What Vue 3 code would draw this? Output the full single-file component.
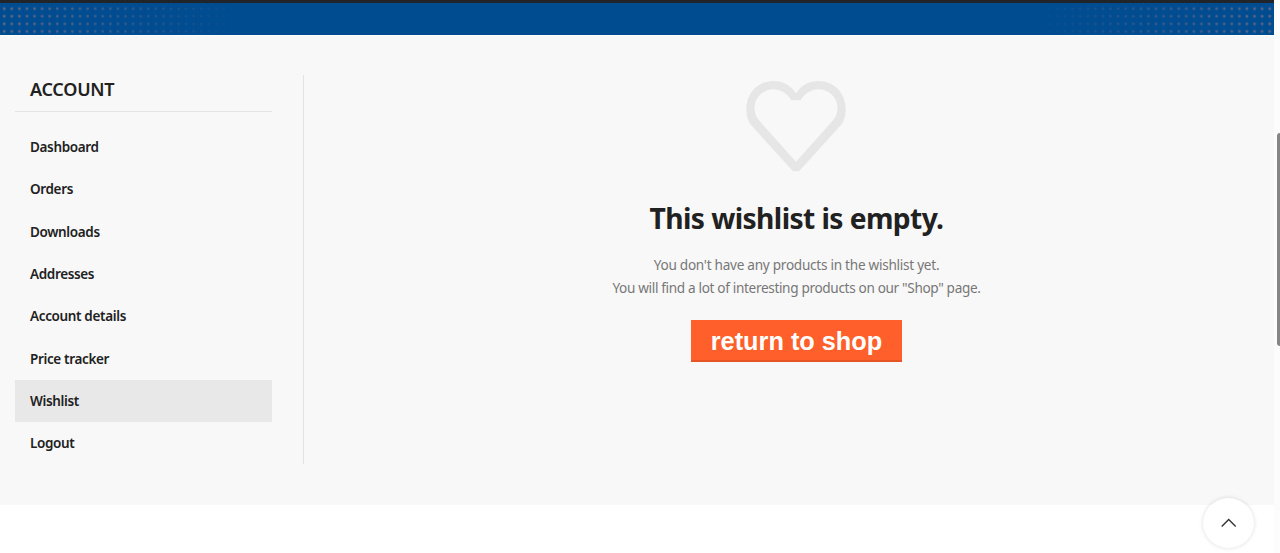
<template>
  <div class="page">
    <div class="page__body">
      <header class="banner">
        <svg class="banner__dots" width="1274" height="32" aria-hidden="true">
          <defs>
            <pattern id="dots" width="7.58" height="7.58" patternUnits="userSpaceOnUse" y="1.8">
              <circle cx="4.2" cy="3.9" r="1.5" fill="#8f7580" />
            </pattern>
            <pattern id="dots-right" x="1266" width="7.58" height="7.58" patternUnits="userSpaceOnUse" y="1.8">
              <circle cx="3.7" cy="3.9" r="1.5" fill="#8f7580" />
            </pattern>
            <linearGradient id="fade">
              <stop offset="0" stop-color="#fff" stop-opacity="0.65" />
              <stop offset="0.19" stop-color="#fff" stop-opacity="0" />
              <stop offset="0.81" stop-color="#fff" stop-opacity="0" />
              <stop offset="1" stop-color="#fff" stop-opacity="0.65" />
            </linearGradient>
            <mask id="edges">
              <rect width="1274" height="32" fill="url(#fade)" />
            </mask>
          </defs>
          <g mask="url(#edges)">
            <rect width="637" height="32" fill="url(#dots)" />
            <rect x="637" width="637" height="32" fill="url(#dots-right)" />
          </g>
        </svg>
      </header>

      <main class="account">
        <aside class="sidebar">
          <h3 class="sidebar__title">Account</h3>
          <ul class="sidebar__list">
            <li v-for="item in menuItems" :key="item">
              <a
                href="#"
                :class="['sidebar__link', { 'sidebar__link--active': item === activeItem }]"
                @click.prevent="activeItem = item"
              >
                {{ item }}
              </a>
            </li>
          </ul>
        </aside>

        <section class="wishlist">
          <svg class="wishlist__heart" width="100" height="91" viewBox="0 0 100 91" aria-hidden="true">
            <path
              fill-rule="evenodd"
              d="M50 12.300C55 4.500 63 0 72.700 0C88 0 99.700 12.300 99.700 28C99.700 34 98.500 39.500 95 44L53 90.300H47L5 44C1.500 39.500 0.300 34 0.300 28C0.300 12.300 12 0 27.300 0C37 0 45 4.500 50 12.300ZM45.400 19.200C41 12.500 35 8.300 27.300 8.300C17 8.300 8.500 16.500 8.500 27C8.500 31.500 10 36 13 39.300L50 80.700L87 39.300C90 36 91.500 31.500 91.500 27C91.500 16.500 83 8.300 72.700 8.300C65 8.300 59 12.500 54.600 19.200Z"
            />
          </svg>
          <h2 class="wishlist__title">This wishlist is empty.</h2>
          <p class="wishlist__text">You don't have any products in the wishlist yet.</p>
          <p class="wishlist__text wishlist__text--hint">
            You will find a lot of interesting products on our "Shop" page.
          </p>
          <a class="wishlist__button" href="#">return to shop</a>
        </section>
      </main>
    </div>

    <div class="scrollbar"><div class="scrollbar__thumb"></div></div>

    <button class="to-top" aria-label="Scroll to top">
      <svg width="16" height="10" viewBox="0 0 16 10">
        <path d="M0.700 8.500L7.700 1.500L14.700 8.500" fill="none" stroke="#333" stroke-width="1.400" />
      </svg>
    </button>
  </div>
</template>

<script setup>
import { ref } from 'vue'

const menuItems = [
  'Dashboard',
  'Orders',
  'Downloads',
  'Addresses',
  'Account details',
  'Price tracker',
  'Wishlist',
  'Logout',
]

const activeItem = ref('Wishlist')
</script>

<style>
body {
  margin: 0;
  overflow: hidden;
}
</style>

<style scoped>
.page {
  display: flex;
  height: 553px;
  background: #fff;
  color: #212121;
  font-family: 'Noto Sans', sans-serif;
}

.page__body {
  width: 1274px;
}

.banner {
  height: 32px;
  border-top: 3px solid #212529;
  background: #004c91;
}

.banner__dots {
  display: block;
}

/* ---------- Account area ---------- */
.account {
  display: flex;
  box-sizing: border-box;
  height: 469px;
  margin-top: 1px;
  padding: 39px 15px 0;
  background: #f8f8f8;
}

.sidebar {
  box-sizing: border-box;
  width: 289px;
  height: 389px;
  padding-right: 31px;
  border-right: 1px solid #e3e3e3;
}

.sidebar__title {
  box-sizing: border-box;
  height: 37px;
  margin: 0 0 14px;
  padding-left: 15px;
  border-bottom: 1px solid #e3e3e3;
  font-size: 18px;
  font-weight: 600;
  letter-spacing: -0.25px;
  line-height: 29px;
  text-transform: uppercase;
}

.sidebar__list {
  margin: 0;
  padding: 0;
  list-style: none;
}

.sidebar__link {
  display: block;
  height: 42.32px;
  padding-left: 15px;
  color: #212121;
  font-size: 13.5px;
  font-weight: 600;
  letter-spacing: -0.35px;
  line-height: 42px;
  text-decoration: none;
}

.sidebar__link--active {
  background: #e8e8e8;
}

/* ---------- Empty wishlist ---------- */
.wishlist {
  display: flex;
  flex: 1;
  flex-direction: column;
  align-items: center;
  padding: 6px 0 0 30px;
  text-align: center;
}

.wishlist__heart {
  margin-right: 1px;
  fill: #e6e6e6;
}

.wishlist__title {
  margin: 25px 0 14px;
  font-size: 28.2px;
  font-weight: 700;
  letter-spacing: -0.58px;
  line-height: 42px;
}

.wishlist__text {
  margin: 0;
  color: #777;
  font-size: 13.6px;
  letter-spacing: -0.27px;
  line-height: 23px;
  white-space: nowrap;
}

.wishlist__text--hint {
  letter-spacing: -0.34px;
}

.wishlist__button {
  box-sizing: border-box;
  width: 211px;
  height: 42px;
  margin-top: 21px;
  background: #ff5f2a;
  box-shadow: inset 0 -2px 0 #e55526;
  color: #fff;
  font: bold 25.3px/42px 'Liberation Sans', sans-serif;
  text-decoration: none;
}

/* ---------- Scrollbar and back-to-top ---------- */
.scrollbar {
  display: flex;
  flex-direction: column;
  align-items: flex-end;
  width: 6px;
  padding-top: 133px;
  background: #fcfcfc;
}

.scrollbar__thumb {
  width: 3px;
  height: 213px;
  border-radius: 3px 0 0 3px;
  background: #858585;
}

.to-top {
  position: absolute;
  top: 498px;
  left: 1203px;
  display: flex;
  align-items: center;
  justify-content: center;
  width: 51px;
  height: 50px;
  padding: 0;
  border: none;
  border-radius: 50%;
  background: #fff;
  box-shadow: 0 0 4px rgba(0, 0, 0, 0.14);
}
</style>
